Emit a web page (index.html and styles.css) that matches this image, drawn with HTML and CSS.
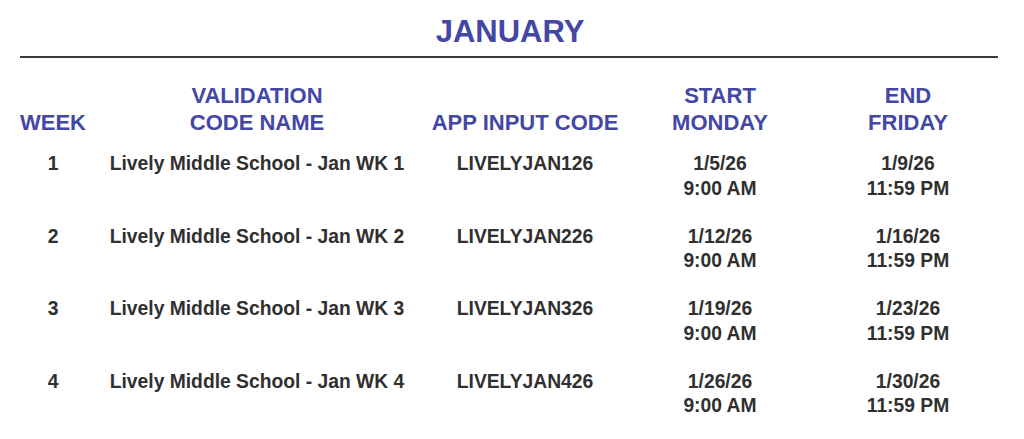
FILE: index.html
```html
<!DOCTYPE html>
<html>
<head>
<meta charset="utf-8">
<link rel="stylesheet" href="styles.css">
</head>
<body>
<div class="page">
  <h1 class="title">JANUARY</h1>
  <div class="rule"></div>
  <div class="table">
    <div class="th">WEEK</div>
    <div class="th">VALIDATION<br>CODE NAME</div>
    <div class="th">APP INPUT CODE</div>
    <div class="th">START<br>MONDAY</div>
    <div class="th">END<br>FRIDAY</div>

    <div class="td">1</div>
    <div class="td">Lively Middle School - Jan WK 1</div>
    <div class="td">LIVELYJAN126</div>
    <div class="td">1/5/26<br>9:00 AM</div>
    <div class="td">1/9/26<br>11:59 PM</div>

    <div class="td">2</div>
    <div class="td">Lively Middle School - Jan WK 2</div>
    <div class="td">LIVELYJAN226</div>
    <div class="td">1/12/26<br>9:00 AM</div>
    <div class="td">1/16/26<br>11:59 PM</div>

    <div class="td">3</div>
    <div class="td">Lively Middle School - Jan WK 3</div>
    <div class="td">LIVELYJAN326</div>
    <div class="td">1/19/26<br>9:00 AM</div>
    <div class="td">1/23/26<br>11:59 PM</div>

    <div class="td">4</div>
    <div class="td">Lively Middle School - Jan WK 4</div>
    <div class="td">LIVELYJAN426</div>
    <div class="td">1/26/26<br>9:00 AM</div>
    <div class="td">1/30/26<br>11:59 PM</div>
  </div>
</div>
</body>
</html>
```

FILE: styles.css
```css
html, body {
  margin: 0;
  padding: 0;
  background: #ffffff;
}
body {
  font-family: "Liberation Sans", Arial, sans-serif;
}
.page {
  width: 978px;
  padding: 0 26px 0 20px;
}
.title {
  margin: 0;
  padding-top: 14px;
  height: 43px;
  box-sizing: border-box;
  text-align: center;
  font-size: 31px;
  line-height: 36px;
  font-weight: 700;
  color: #4347a6;
  padding-left: 2px;
}
.rule {
  height: 2px;
  background: #3a3a3a;
  margin-top: 13px;
}
.table {
  display: grid;
  grid-template-columns: 66px 342px 194px 196px 180px;
  margin-top: 24px;
}
.th {
  display: flex;
  align-items: flex-end;
  justify-content: center;
  text-align: center;
  font-size: 22px;
  line-height: 27px;
  font-weight: 700;
  color: #4347a6;
  padding-bottom: 16px;
}
.td {
  text-align: center;
  font-size: 19.3px;
  line-height: 24.5px;
  font-weight: 700;
  color: #303030;
  height: 72.5px;
}
```
